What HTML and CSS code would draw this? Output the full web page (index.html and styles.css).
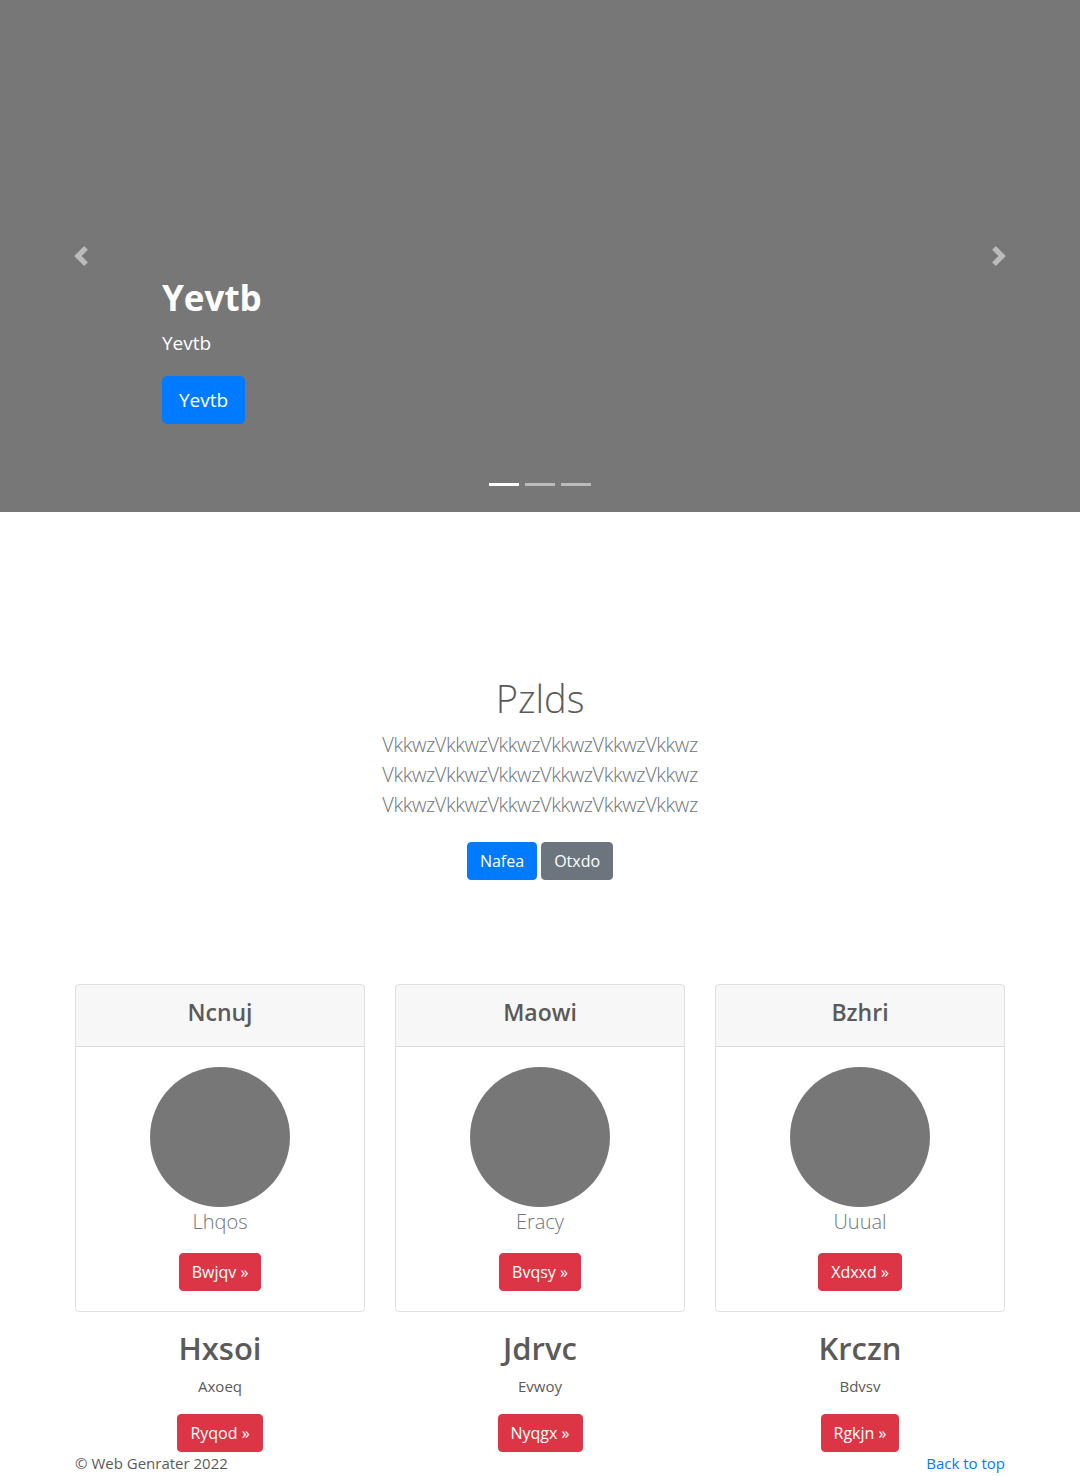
FILE: index.html
```html
<!DOCTYPE html>
<html lang="en">
<head>
<meta charset="utf-8">
<title>Carousel</title>
<link rel="stylesheet" href="styles.css">
</head>
<body>
<div class="carousel">
  <a class="ctrl ctrl-prev" href="#">
    <svg width="20" height="20" viewBox="0 0 8 8"><path d="M5.25 0l-4 4 4 4 1.5-1.5L4.25 4l2.5-2.5L5.25 0z" fill="#fff"/></svg>
  </a>
  <div class="caption">
    <h1 class="cap-title">Yevtb</h1>
    <p class="cap-text">Yevtb</p>
    <a class="btn btn-lg btn-primary" href="#">Yevtb</a>
  </div>
  <a class="ctrl ctrl-next" href="#">
    <svg width="20" height="20" viewBox="0 0 8 8"><path d="M2.75 0l-1.5 1.5L3.75 4l-2.5 2.5L2.75 8l4-4-4-4z" fill="#fff"/></svg>
  </a>
  <ol class="indicators">
    <li class="active"></li>
    <li></li>
    <li></li>
  </ol>
</div>

<section class="hero">
  <h1 class="hero-title">Pzlds</h1>
  <p class="lead hero-lead">VkkwzVkkwzVkkwzVkkwzVkkwzVkkwz<br>VkkwzVkkwzVkkwzVkkwzVkkwzVkkwz<br>VkkwzVkkwzVkkwzVkkwzVkkwzVkkwz</p>
  <div class="hero-actions">
    <a class="btn btn-primary" href="#">Nafea</a>
    <a class="btn btn-secondary" href="#">Otxdo</a>
  </div>
</section>

<div class="container">
  <div class="cards">
    <div class="card">
      <div class="card-header"><h4>Ncnuj</h4></div>
      <div class="card-body">
        <div class="avatar"></div>
        <p class="lead card-lead">Lhqos</p>
        <a class="btn btn-danger" href="#">Bwjqv &raquo;</a>
      </div>
    </div>
    <div class="card">
      <div class="card-header"><h4>Maowi</h4></div>
      <div class="card-body">
        <div class="avatar"></div>
        <p class="lead card-lead">Eracy</p>
        <a class="btn btn-danger" href="#">Bvqsy &raquo;</a>
      </div>
    </div>
    <div class="card">
      <div class="card-header"><h4>Bzhri</h4></div>
      <div class="card-body">
        <div class="avatar"></div>
        <p class="lead card-lead">Uuual</p>
        <a class="btn btn-danger" href="#">Xdxxd &raquo;</a>
      </div>
    </div>
  </div>

  <div class="marketing">
    <div class="col">
      <h2>Hxsoi</h2>
      <p>Axoeq</p>
      <a class="btn btn-danger" href="#">Ryqod &raquo;</a>
    </div>
    <div class="col">
      <h2>Jdrvc</h2>
      <p>Evwoy</p>
      <a class="btn btn-danger" href="#">Nyqgx &raquo;</a>
    </div>
    <div class="col">
      <h2>Krczn</h2>
      <p>Bdvsv</p>
      <a class="btn btn-danger" href="#">Rgkjn &raquo;</a>
    </div>
  </div>

  <footer class="footer">
    <p class="copy">&copy; Web Genrater 2022</p>
    <a class="totop" href="#">Back to top</a>
  </footer>
</div>
</body>
</html>
```

FILE: styles.css
```css
* { box-sizing: border-box; }
html, body { margin: 0; padding: 0; }
body {
  font-family: "Open Sans", "Noto Sans", sans-serif;
  font-size: 16px;
  line-height: 1.5;
  color: #5a5a5a;
  background: #fff;
}
a { text-decoration: none; }
h1, h2, h4, p { margin: 0; }

.btn {
  display: inline-block;
  font-size: 16px;
  line-height: 24px;
  padding: 6px 12px;
  border-radius: 4px;
  color: #fff;
  border: 1px solid transparent;
}
.btn-lg { font-size: 19px; line-height: 30px; padding: 8px 16px; border-radius: 5px; }
.btn-primary { background: #007bff; border-color: #007bff; }
.btn-secondary { background: #6c757d; border-color: #6c757d; }
.btn-danger { background: #dc3545; border-color: #dc3545; }

/* carousel */
.carousel {
  position: relative;
  height: 512px;
  background: #777;
}
.caption {
  position: absolute;
  left: 162px;
  right: 162px;
  bottom: 88px;
  color: #fff;
  text-align: left;
}
.cap-title { font-size: 35px; font-weight: 700; line-height: 48px; margin-bottom: 6px; }
.cap-text { font-size: 19px; line-height: 30px; margin-bottom: 18px; }
.ctrl {
  position: absolute;
  top: 0;
  bottom: 0;
  width: 162px;
  display: flex;
  align-items: center;
  justify-content: center;
  opacity: .5;
}
.ctrl-prev { left: 0; }
.ctrl-next { right: 0; }
.indicators {
  position: absolute;
  left: 0;
  right: 0;
  bottom: 26px;
  margin: 0;
  padding: 0;
  list-style: none;
  display: flex;
  justify-content: center;
  gap: 6px;
}
.indicators li {
  width: 30px;
  height: 3px;
  background: #fff;
  opacity: .5;
}
.indicators li.active { opacity: 1; }

/* hero */
.hero {
  padding: 162px 15px 0;
  text-align: center;
}
.hero-title { font-size: 38px; font-weight: 300; line-height: 48px; margin-bottom: 8px; }
.lead { font-size: 20px; font-weight: 300; line-height: 30px; }
.hero-lead { color: #6c757d; margin-bottom: 22px; letter-spacing: -0.4px; }
.hero-actions { display: flex; justify-content: center; gap: 4px; }

/* container */
.container {
  width: 960px;
  margin: 0 auto;
  padding: 0 15px;
}
.cards {
  display: grid;
  grid-template-columns: repeat(3, 1fr);
  gap: 30px;
  margin-top: 104px;
  text-align: center;
}
.card {
  border: 1px solid rgba(0,0,0,.125);
  border-radius: 4px;
  overflow: hidden;
}
.card-header {
  background: rgba(0,0,0,.03);
  border-bottom: 1px solid rgba(0,0,0,.125);
  padding: 13px 20px 19px;
}
.card-header h4 { font-size: 23px; font-weight: 600; line-height: 29px; }
.card-body {
  padding: 20px;
  display: flex;
  flex-direction: column;
  align-items: center;
}
.avatar {
  width: 140px;
  height: 140px;
  border-radius: 50%;
  background: #777;
}
.card-lead { color: #6c757d; margin-bottom: 16px; }

.marketing {
  display: grid;
  grid-template-columns: repeat(3, 1fr);
  gap: 30px;
  text-align: center;
  margin-top: 17px;
}
.marketing h2 { font-size: 31px; font-weight: 600; line-height: 38px; margin-bottom: 8px; }
.marketing p { font-size: 15px; margin-bottom: 16px; }

.footer {
  display: flex;
  justify-content: space-between;
  align-items: baseline;
}
.copy { font-size: 15px; }
.totop { color: #007bff; font-size: 15px; }
```
